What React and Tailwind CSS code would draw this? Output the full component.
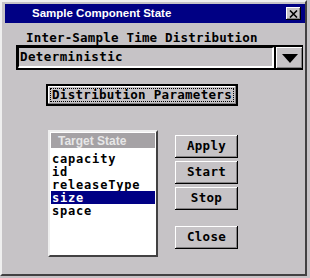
import React from "react";

const mono = { fontFamily: '"DejaVu Sans Mono", "Liberation Mono", monospace' };

function Btn({ children, className = "" }) {
  return (
    <div
      className={
        "flex items-center justify-center bg-[#c6c3c6] text-black font-bold text-[12.5px] tracking-[0.3px] leading-none shadow-[inset_-1px_-1px_0_#000,inset_1px_1px_0_#fff,inset_-2px_-2px_0_#848284] " +
        className
      }
      style={mono}
    >
      {children}
    </div>
  );
}

export default function App() {
  const items = ["capacity", "id", "releaseType", "size", "space"];
  return (
    <div className="w-[310px] h-[278px] bg-[#c6c3c6] overflow-hidden">
      <div className="w-[307px] h-[276px] border-t-2 border-l-2 border-t-[#efefef] border-l-[#efefef] border-r-2 border-b-2 border-r-[#424142] border-b-[#424142] pt-[2px] pl-[3px] flex flex-col">
        {/* title bar */}
        <div className="h-[19px] w-[300px] bg-[#000084] flex items-center justify-between">
          <span
            className="pl-[27px] text-white font-bold text-[11.5px] leading-none"
            style={{ fontFamily: '"Liberation Sans", Arial, sans-serif' }}
          >
            Sample Component State
          </span>
          <div className="mr-[4px] w-[15px] h-[13px] bg-[#c6c3c6] flex items-center justify-center shadow-[inset_-1px_-1px_0_#000,inset_1px_1px_0_#fff,inset_-2px_-2px_0_#848284]">
            <svg width="9" height="8" viewBox="0 0 9 8">
              <path d="M1 0.5 L8 7.5 M8 0.5 L1 7.5" stroke="#000" strokeWidth="1.6" />
            </svg>
          </div>
        </div>

        {/* label */}
        <div className="mt-[8px] ml-[21px] h-[14px] flex items-center text-black font-bold text-[12.5px] tracking-[0.2px] leading-none" style={mono}>
          Inter-Sample Time Distribution
        </div>

        {/* combo */}
        <div className="ml-[11px] flex h-[25px]">
          <div className="w-[260px] h-[25px] border-2 border-black">
            <div className="h-full border-t border-l border-black border-b-2 border-r-2 border-b-white border-r-white flex items-center pl-[1px] text-black font-bold text-[12.5px] tracking-[0.4px] leading-none" style={mono}>
              Deterministic
            </div>
          </div>
          <div className="w-[27px] h-[25px] border-t-2 border-b border-black bg-[#c6c3c6] flex items-center justify-center shadow-[inset_-1px_-1px_0_#000,inset_1px_1px_0_#fff,inset_-2px_-2px_0_#848284]">
            <svg width="16" height="9" viewBox="0 0 16 9">
              <path d="M0 0 L16 0 L8 9 Z" fill="#000" />
            </svg>
          </div>
        </div>

        {/* distribution params default button */}
        <div className="ml-[41px] mt-[14px] w-[192px] h-[22px] border-2 border-black">
          <div className="w-full h-full p-[2px] shadow-[inset_-1px_-1px_0_#848284,inset_1px_1px_0_#fff]">
            <div className="w-full h-full border border-dotted border-black flex items-center justify-center text-black font-bold text-[12.5px] tracking-[0.3px] leading-none" style={mono}>
              Distribution Parameters
            </div>
          </div>
        </div>

        {/* list + buttons */}
        <div className="mt-[24px] ml-[43px] flex">
          <div className="w-[110px] h-[127px] border-t-2 border-l-2 border-t-[#efefef] border-l-[#efefef] border-r-2 border-b-2 border-r-[#424142] border-b-[#424142] bg-white p-[1px] flex flex-col">
            <div
              className="h-[15px] bg-[#a5a2a5] text-[#e7e7e7] font-bold text-[12px] leading-none flex items-center pl-[7px]"
              style={{ fontFamily: '"Liberation Sans", Arial, sans-serif' }}
            >
              Target State
            </div>
            <div className="mt-[4px] flex flex-col">
              {items.map((it) => (
                <div
                  key={it}
                  className={
                    "h-[13px] flex items-center pl-[1px] font-bold text-[12px] tracking-[0.8px] leading-[12px] " +
                    (it === "size" ? "bg-[#000084] text-white" : "text-black")
                  }
                  style={mono}
                >
                  {it}
                </div>
              ))}
            </div>
          </div>
          <div className="ml-[17px] mt-[5px] flex flex-col">
            <Btn className="w-[63px] h-[23px]">Apply</Btn>
            <Btn className="w-[63px] h-[23px] mt-[3px]">Start</Btn>
            <Btn className="w-[63px] h-[23px] mt-[3px]">Stop</Btn>
            <Btn className="w-[63px] h-[23px] mt-[16px]">Close</Btn>
          </div>
        </div>
      </div>
    </div>
  );
}
